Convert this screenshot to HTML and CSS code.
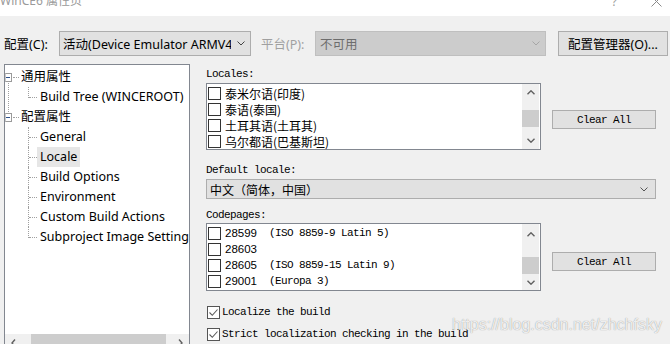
FILE: index.html
```html
<!DOCTYPE html>
<html>
<head>
<meta charset="utf-8">
<link rel="stylesheet" href="styles.css">
</head>
<body>
<div class="titlebar">
  <span class="title">WinCE6 属性页</span>
  <span class="help">?</span>
  <svg class="close" width="11" height="11" viewBox="0 0 11 11"><path d="M0.5 0.5 L10.5 10.5 M10.5 0.5 L0.5 10.5" stroke="#8a8a8a" stroke-width="1" fill="none"/></svg>
</div>

<div class="toolbar">
  <span class="tlabel lbl-config">配置(C):</span>
  <div class="combo combo-config">
    <span class="combo-text">活动(Device Emulator ARMV4</span>
    <svg class="chev" width="8" height="5" viewBox="0 0 8 5"><path d="M0.5 0.5 L4 4 L7.5 0.5" stroke="#444" fill="none"/></svg>
  </div>
  <span class="tlabel lbl-platform">平台(P):</span>
  <div class="combo combo-disabled">
    <span class="combo-text">不可用</span>
    <svg class="chev" width="8" height="5" viewBox="0 0 8 5"><path d="M0.5 0.5 L4 4 L7.5 0.5" stroke="#a6a6a6" fill="none"/></svg>
  </div>
  <button class="btn btn-manager">配置管理器(O)...</button>
</div>

<div class="main">
  <div class="tree">
    <div class="tree-body">
      <ul class="tree-list">
        <li class="node node-first">
          <div class="node-row"><span class="exp"></span><span class="dash"></span><span class="nlabel">通用属性</span></div>
          <ul class="children">
            <li class="leaf last"><span class="llabel">Build Tree (WINCEROOT)</span></li>
          </ul>
        </li>
        <li class="node">
          <div class="node-row"><span class="exp"></span><span class="dash"></span><span class="nlabel">配置属性</span></div>
          <ul class="children">
            <li class="leaf"><span class="llabel">General</span></li>
            <li class="leaf"><span class="llabel selected">Locale</span></li>
            <li class="leaf"><span class="llabel">Build Options</span></li>
            <li class="leaf"><span class="llabel">Environment</span></li>
            <li class="leaf"><span class="llabel">Custom Build Actions</span></li>
            <li class="leaf last"><span class="llabel">Subproject Image Settings</span></li>
          </ul>
        </li>
      </ul>
    </div>
    <div class="hscroll">
      <span class="harrow"><svg width="5" height="8" viewBox="0 0 5 8"><path d="M4 0.5 L1 4 L4 7.5" stroke="#606060" stroke-width="1.4" fill="none"/></svg></span>
      <span class="hthumb"></span>
      <span class="hspacer"></span>
      <span class="harrow"><svg width="5" height="8" viewBox="0 0 5 8"><path d="M1 0.5 L4 4 L1 7.5" stroke="#606060" stroke-width="1.4" fill="none"/></svg></span>
    </div>
  </div>

  <div class="pane">
    <div class="mlabel lbl-locales">Locales:</div>
    <div class="listrow listrow-a">
      <div class="list list-a">
        <div class="items">
          <div class="item"><span class="cb"></span><span class="itext cjk">泰米尔语(印度)</span></div>
          <div class="item"><span class="cb"></span><span class="itext cjk">泰语(泰国)</span></div>
          <div class="item"><span class="cb"></span><span class="itext cjk">土耳其语(土耳其)</span></div>
          <div class="item"><span class="cb"></span><span class="itext cjk">乌尔都语(巴基斯坦)</span></div>
        </div>
        <div class="vscroll">
          <span class="varrow"><svg width="8" height="5" viewBox="0 0 8 5"><path d="M0.5 4.3 L4 0.8 L7.5 4.3" stroke="#606060" stroke-width="1.4" fill="none"/></svg></span>
          <span class="vthumb thumb-a"></span>
          <span class="vspacer"></span>
          <span class="varrow"><svg width="8" height="5" viewBox="0 0 8 5"><path d="M0.5 0.7 L4 4.2 L7.5 0.7" stroke="#606060" stroke-width="1.4" fill="none"/></svg></span>
        </div>
      </div>
      <button class="btn btn-clear btn-clear-a">Clear All</button>
    </div>

    <div class="mlabel lbl-default">Default locale:</div>
    <div class="combo combo-locale">
      <span class="combo-text cjk">中文（简体，中国）</span>
      <svg class="chev" width="8" height="5" viewBox="0 0 8 5"><path d="M0.5 0.5 L4 4 L7.5 0.5" stroke="#555" fill="none"/></svg>
    </div>

    <div class="mlabel lbl-codepages">Codepages:</div>
    <div class="listrow listrow-b">
      <div class="list list-b">
        <div class="items">
          <div class="item"><span class="cb"></span><span class="num">28599</span><span class="mono">(ISO 8859-9 Latin 5)</span></div>
          <div class="item"><span class="cb"></span><span class="num">28603</span></div>
          <div class="item"><span class="cb"></span><span class="num">28605</span><span class="mono">(ISO 8859-15 Latin 9)</span></div>
          <div class="item"><span class="cb"></span><span class="num">29001</span><span class="mono">(Europa 3)</span></div>
        </div>
        <div class="vscroll vscroll-b">
          <span class="varrow"><svg width="8" height="5" viewBox="0 0 8 5"><path d="M0.5 4.3 L4 0.8 L7.5 4.3" stroke="#606060" stroke-width="1.4" fill="none"/></svg></span>
          <span class="vthumb thumb-b"></span>
          <span class="vspacer"></span>
          <span class="varrow"><svg width="8" height="5" viewBox="0 0 8 5"><path d="M0.5 0.7 L4 4.2 L7.5 0.7" stroke="#606060" stroke-width="1.4" fill="none"/></svg></span>
        </div>
      </div>
      <button class="btn btn-clear btn-clear-b">Clear All</button>
    </div>

    <div class="check-row check-1">
      <span class="cbx"><svg width="11" height="11" viewBox="0 0 11 11"><path d="M1.5 5.5 L4.3 8.3 L9.5 2.5" stroke="#5a5a5a" stroke-width="1.1" fill="none"/></svg></span>
      <span class="mono">Localize the build</span>
    </div>
    <div class="check-row check-2">
      <span class="cbx"><svg width="11" height="11" viewBox="0 0 11 11"><path d="M1.5 5.5 L4.3 8.3 L9.5 2.5" stroke="#5a5a5a" stroke-width="1.1" fill="none"/></svg></span>
      <span class="mono">Strict localization checking in the build</span>
    </div>
  </div>
</div>

<div class="watermark">https://blog.csdn.net/zhchfsky</div>
</body>
</html>
```

FILE: styles.css
```css
* { box-sizing: border-box; }

body {
  margin: 0;
  width: 670px;
  height: 344px;
  overflow: hidden;
  position: relative;
  background: #f0f0f0;
  color: #000;
  font-family: "Noto Sans", "Noto Sans CJK SC", sans-serif;
  font-size: 12.5px;
}

ul { list-style: none; margin: 0; padding: 0; }

/* title bar */
.titlebar {
  height: 16px;
  background: #fff;
  display: flex;
  align-items: flex-start;
  overflow: hidden;
}
.title {
  margin-top: -7px;
  font-size: 12px;
  line-height: 16px;
  color: #9a9a9a;
  white-space: nowrap;
}
.help {
  margin-left: auto;
  margin-top: -6px;
  font-size: 12px;
  line-height: 16px;
  color: #a0a0a0;
}
.close {
  margin-left: 34px;
  margin-right: 8px;
  margin-top: -4px;
}

/* toolbar */
.toolbar {
  display: flex;
  align-items: center;
  height: 25px;
  margin-top: 15px;
}
.tlabel { white-space: nowrap; }
.lbl-config { margin-left: 4px; width: 55px; }
.lbl-platform { margin-left: 10px; width: 54px; color: #a0a0a0; }

.combo {
  display: flex;
  align-items: center;
  border: 1px solid #adadad;
  background: #e1e1e1;
  padding-left: 3px;
  white-space: nowrap;
  overflow: hidden;
}
.combo-text { flex: 1; overflow: hidden; white-space: nowrap; }
.chev { flex: none; margin: 0 5px 0 6px; }
.combo-config { width: 192px; height: 25px; }
.combo-disabled {
  width: 231px;
  height: 25px;
  background: #cccccc;
  border-color: #bfbfbf;
  color: #6d6d6d;
  padding-left: 4px;
}

.btn {
  border: 1px solid #adadad;
  background: #e1e1e1;
  color: #000;
  padding: 0;
  margin: 0;
  font-family: "Noto Sans", "Noto Sans CJK SC", sans-serif;
  font-size: 12.5px;
}
.btn-manager { margin-left: 12px; width: 110px; height: 25px; }

/* main */
.main {
  display: flex;
  align-items: flex-start;
  margin-top: 8px;
}

.tree {
  margin-left: 4px;
  width: 186px;
  height: 290px;
  border: 1px solid #828790;
  background: #fff;
  display: flex;
  flex-direction: column;
}
.tree-body {
  flex: 0 0 269px;
  padding-top: 2px;
  overflow: hidden;
}
.tree-list { position: relative; }
.node { position: relative; }
.node-first::before {
  content: "";
  position: absolute;
  left: 3px;
  top: 14px;
  bottom: -5px;
  border-left: 1px dotted #a0a0a0;
}
.node-row {
  display: flex;
  align-items: center;
  height: 20px;
  white-space: nowrap;
}
.exp {
  width: 7px;
  height: 9px;
  border: 1px solid #9a9a9a;
  border-left-color: #c8c8c8;
  background: #fff;
  position: relative;
}
.exp::after {
  content: "";
  position: absolute;
  left: 0px;
  top: 3px;
  width: 4px;
  height: 1px;
  background: #2b4f8a;
}
.dash {
  width: 6px;
  margin-left: 1px;
  border-top: 1px dotted #a0a0a0;
}
.nlabel { margin-left: 2px; line-height: 20px; }

.leaf {
  position: relative;
  height: 20px;
  line-height: 20px;
  padding-left: 32px;
  white-space: nowrap;
}
.leaf::before {
  content: "";
  position: absolute;
  left: 23px;
  top: 0;
  height: 20px;
  border-left: 1px dotted #a0a0a0;
}
.leaf.last::before { height: 11px; }
.leaf::after {
  content: "";
  position: absolute;
  left: 24px;
  top: 10px;
  width: 8px;
  border-top: 1px dotted #a0a0a0;
}
.llabel {
  display: inline-block;
  padding: 0 3px;
  height: 20px;
}
.llabel.selected { background: #e6e6e6; }

.hscroll {
  height: 17px;
  flex: none;
  background: #f0f0f0;
  display: flex;
  align-items: center;
}
.harrow {
  width: 17px;
  height: 17px;
  display: flex;
  align-items: center;
  justify-content: center;
  flex: none;
}
.hthumb {
  width: 135px;
  height: 17px;
  margin-left: 9px;
  background: #cdcdcd;
}
.hspacer { flex: 1; }

/* right pane */
.pane {
  margin-left: 16px;
  width: 450px;
  display: flex;
  flex-direction: column;
}
.mlabel, .mono, .btn-clear {
  font-family: "Liberation Mono", monospace;
  font-size: 11px;
  letter-spacing: -0.6px;
}
.mlabel { height: 14px; line-height: 14px; white-space: nowrap; }
.lbl-locales { margin-top: 3px; }
.lbl-default { margin-top: 13px; }
.lbl-codepages { margin-top: 9px; }

.listrow { display: flex; align-items: flex-start; }
.listrow-a { margin-top: 2px; }
.listrow-b { margin-top: 1px; }

.list {
  width: 335px;
  border: 1px solid #828790;
  background: #fff;
  display: flex;
}
.list-a { height: 67px; }
.list-b { height: 68px; }

.items { flex: 1; padding-top: 1px; overflow: hidden; }
.item {
  height: 16px;
  display: flex;
  align-items: center;
  white-space: nowrap;
}
.cb {
  width: 13px;
  height: 13px;
  border: 1px solid #333;
  background: #fff;
  margin-left: 1px;
  flex: none;
}
.itext { margin-left: 4px; }
.cjk {
  font-family: "Noto Sans CJK SC", sans-serif;
  font-size: 12px;
}
.num {
  margin-left: 4px;
  width: 44px;
  font-family: "Liberation Sans", sans-serif;
  font-size: 11.5px;
}

.vscroll {
  width: 17px;
  background: #f0f0f0;
  display: flex;
  flex-direction: column;
  margin-right: 1px;
}
.varrow {
  height: 17px;
  display: flex;
  align-items: center;
  justify-content: center;
  flex: none;
}
.vthumb { height: 17px; background: #cdcdcd; flex: none; }
.thumb-a { margin-top: 9px; }
.thumb-b { margin-top: 14px; }
.vscroll-b .varrow:first-child { margin-top: 2px; }
.vspacer { flex: 1; }

.btn-clear {
  width: 104px;
  height: 19px;
  margin-left: 11px;
  font-size: 11px;
}
.btn-clear-a { margin-top: 27px; }
.btn-clear-b { margin-top: 29px; }

.combo-locale {
  margin-top: 2px;
  width: 450px;
  height: 20px;
  padding-left: 3px;
}
.combo-locale .chev { margin-right: 7px; }

.check-row {
  display: flex;
  align-items: center;
  height: 16px;
  white-space: nowrap;
}
.check-1 { margin-top: 13px; }
.check-2 { margin-top: 6px; }
.cbx {
  width: 13px;
  height: 13px;
  border: 1px solid #555;
  background: #fff;
  margin-left: 1px;
  margin-right: 2px;
  display: flex;
  align-items: center;
  justify-content: center;
  flex: none;
}

.watermark {
  position: absolute;
  left: 452px;
  top: 316px;
  font-family: "Liberation Sans", sans-serif;
  font-size: 16px;
  line-height: 18px;
  color: rgba(255, 255, 255, 0.85);
  text-shadow: 0 0 1px rgba(0, 0, 0, 0.45);
  white-space: nowrap;
}
```
